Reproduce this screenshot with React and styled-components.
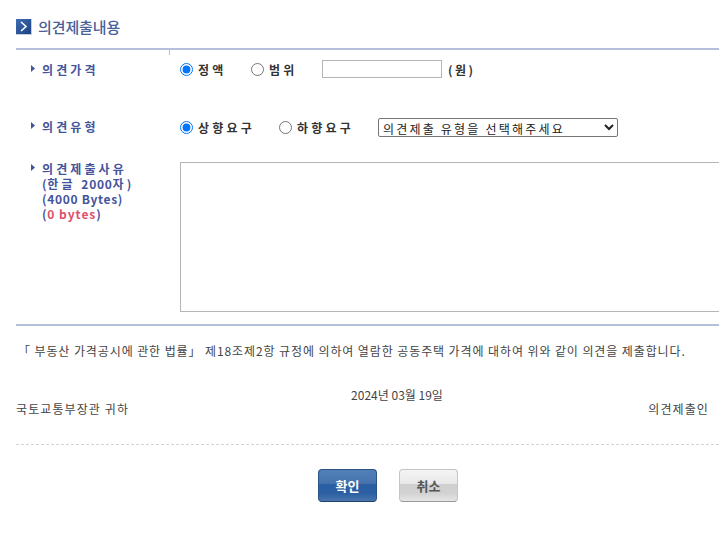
import React from "react";
import styled, { createGlobalStyle } from "styled-components";

const Global = createGlobalStyle`
  html, body { margin: 0; padding: 0; background: #fff; overflow: hidden; }
  body { font-family: "Noto Sans CJK KR", "Liberation Sans", sans-serif; font-size: 12px; color: #333; }
`;
const Page = styled.div`
  width: 719px; height: 538px; overflow: hidden; padding: 19px 0 0 16px; box-sizing: border-box;
`;
const TitleBar = styled.div`
  display: flex; align-items: center; gap: 6px; height: 16px; margin-bottom: 13px;
`;
const TitleText = styled.h2`
  margin: 0; font-size: 15px; line-height: 16px; font-weight: 500; color: #4a6098; letter-spacing: -0.1px;
`;
const Rule = styled.div`
  height: 2px; background: #b4c0dc; width: 703px;
`;
const Form = styled.div`
  position: relative; width: 703px; height: 274px;
`;
const Tick = styled.span`
  position: absolute; left: 153px; top: 0; width: 1px; height: 5px; background: #b9bfca;
`;
const Row = styled.div`
  display: flex; align-items: ${p => p.$top ? "flex-start" : "center"}; height: ${p => p.$h}px; margin-top: ${p => p.$mt || 0}px;
`;
const Label = styled.div`
  width: 164px; box-sizing: border-box; padding-left: 15px; display: flex; gap: 7px; flex-shrink: 0;
  margin-top: ${p => p.$lift || 0}px;
`;
const Arrow = styled.svg`
  width: 4px; height: 7px; flex-shrink: 0; margin-top: 3px;
`;
const LabelText = styled.div`
  font-size: 12px; line-height: 15px; font-weight: 700; color: #44549c; letter-spacing: 3.1px; white-space: nowrap;
`;
const Latin = styled.span`letter-spacing: 0.7px;`;
const Red = styled(Latin)`color: #e0506c; letter-spacing: 1px;`;
const Controls = styled.div`
  display: flex; align-items: center;
`;
const Radio = styled.input.attrs({ type: "radio" })`
  width: 13px; height: 13px; margin: 0 5px 0 0; accent-color: #0075ff;
`;
const Choice = styled.label`
  display: flex; align-items: center; font-size: 12px; line-height: 15px; font-weight: 700; color: #333; letter-spacing: 3.2px; width: ${p => p.$w}px; white-space: nowrap;
`;
const Amount = styled.input`
  width: 120px; height: 18px; box-sizing: border-box; border: 1px solid #b5b5b5; padding: 0; margin: 0 6px 0 0; background: #fff;
`;
const Unit = styled.span`
  font-size: 12px; font-weight: 700; color: #333; letter-spacing: 2.4px;
`;
const Picker = styled.select`
  width: 240px; height: 19px; box-sizing: border-box; font-family: "Noto Sans CJK KR", sans-serif; font-size: 12px; letter-spacing: 2.2px; color: #222; background: #fff; border: 1px solid #767676; border-radius: 2px; padding: 0; margin: 0;
`;
const Reason = styled.textarea`
  display: block; width: 540px; height: 150px; box-sizing: border-box; border: 1px solid #b5b5b5; margin: 0; padding: 0; resize: none; flex-shrink: 0; background: #fff;
`;
const Notice = styled.p`
  margin: 16px 0 0 0; padding-left: 2px; font-size: 12px; line-height: 18px; color: #444; letter-spacing: 0.9px; white-space: nowrap;
`;
const SignBlock = styled.div`
  width: 693px; height: 36px; margin-top: 27px; font-size: 12px; color: #444; line-height: 16px;
`;
const DateLine = styled.div`
  text-align: center; width: 762px;
`;
const SignRow = styled.div`
  display: flex; justify-content: space-between; margin-top: -2px; letter-spacing: 1.1px;
`;
const Dashed = styled.div`
  width: 703px; border-top: 1px dashed #d4d4d4; margin-top: 21px;
`;
const Buttons = styled.div`
  display: flex; gap: 22px; margin: 24px 0 0 302px;
`;
const Btn = styled.button`
  width: 59px; height: 33px; border-radius: 4px; font-family: "Noto Sans CJK KR", sans-serif; font-size: 13px; font-weight: 700; padding: 0;
  color: ${p => p.$primary ? "#fff" : "#555"};
  border: 1px solid ${p => p.$primary ? "#2b5486" : "#c4c4c4"};
  border-bottom-color: ${p => p.$primary ? "#1f3f6f" : "#999"};
  background: ${p => p.$primary
    ? "linear-gradient(#5080b8 0%, #4672ac 45%, #2a5fa4 46%, #2c5fa2 75%, #4b76ae 100%)"
    : "linear-gradient(#f4f4f4 0%, #e8e8e8 45%, #d0d0d0 46%, #d2d2d2 75%, #e6e6e6 100%)"};
`;

const Bullet = () => (
  <Arrow viewBox="0 0 4 7"><path d="M0 0 L4 3.5 L0 7Z" fill="#44549c" /></Arrow>
);

export default function App() {
  return (
    <Page>
      <Global />
      <TitleBar>
        <svg width="16" height="16" viewBox="0 0 16 16">
          <defs>
            <linearGradient id="g" x1="0" y1="0" x2="1" y2="1">
              <stop offset="0" stopColor="#3f6fb5" /><stop offset="1" stopColor="#1c3f80" />
            </linearGradient>
          </defs>
          <rect width="16" height="16" fill="#c6cfe2" />
          <rect width="15" height="15" fill="url(#g)" />
          <path d="M5 3 L10 7.5 L5 12" fill="none" stroke="#fff" strokeWidth="1.6" />
        </svg>
        <TitleText>의견제출내용</TitleText>
      </TitleBar>
      <Rule />
      <Form>
        <Tick />
        <Row $h={38}>
          <Label><Bullet /><LabelText>의견가격</LabelText></Label>
          <Controls>
            <Radio name="a" defaultChecked />
            <Choice $w={53}>정액</Choice>
            <Radio name="a" />
            <Choice $w={53}>범위</Choice>
            <Amount />
            <Unit>(원)</Unit>
          </Controls>
        </Row>
        <Row $h={19} $mt={30}>
          <Label $lift={-2}><Bullet /><LabelText>의견유형</LabelText></Label>
          <Controls>
            <Radio name="b" defaultChecked />
            <Choice $w={81}>상향요구</Choice>
            <Radio name="b" />
            <Choice $w={81}>하향요구</Choice>
            <Picker defaultValue="x"><option value="x">의견제출 유형을 선택해주세요</option></Picker>
          </Controls>
        </Row>
        <Row $top $h={150} $mt={25}>
          <Label $lift={-1}>
            <Bullet />
            <LabelText>의견제출사유<br /><Latin>(</Latin>한글 <Latin>2000</Latin>자<Latin>)</Latin><br /><Latin>(4000 Bytes)</Latin><br /><Latin>(</Latin><Red>0 bytes</Red><Latin>)</Latin></LabelText>
          </Label>
          <Reason />
        </Row>
      </Form>
      <Rule />
      <Notice>「 부동산 가격공시에 관한 법률」 제18조제2항 규정에 의하여 열람한 공동주택 가격에 대하여 위와 같이 의견을 제출합니다.</Notice>
      <SignBlock>
        <DateLine>2024년 03월 19일</DateLine>
        <SignRow><span>국토교통부장관 귀하</span><span>의견제출인</span></SignRow>
      </SignBlock>
      <Dashed />
      <Buttons>
        <Btn $primary>확인</Btn>
        <Btn>취소</Btn>
      </Buttons>
    </Page>
  );
}
